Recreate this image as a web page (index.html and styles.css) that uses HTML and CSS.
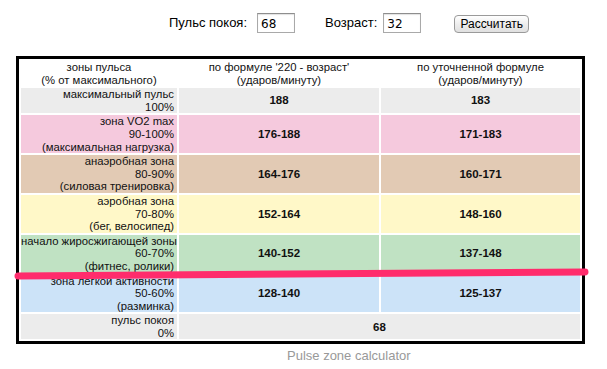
FILE: index.html
```html
<!DOCTYPE html>
<html lang="ru">
<head>
<meta charset="utf-8">
<title>Pulse zone calculator</title>
<link rel="stylesheet" href="styles.css">
</head>
<body>
<div class="page">
  <form class="calc">
    <label class="lbl lbl-pulse">Пульс покоя:</label>
    <input class="num" type="text" value="68">
    <label class="lbl lbl-age">Возраст:</label>
    <input class="num" type="text" value="32">
    <button class="btn" type="button">Рассчитать</button>
  </form>

  <div class="table-wrap">
    <table class="zones">
      <colgroup>
        <col class="c1">
        <col class="c2">
        <col class="c3">
      </colgroup>
      <thead>
        <tr>
          <th>зоны пульса<br>(% от максимального)</th>
          <th>по формуле '220 - возраст'<br>(ударов/минуту)</th>
          <th>по уточненной формуле<br>(ударов/минуту)</th>
        </tr>
      </thead>
      <tbody>
        <tr class="z-max">
          <td class="name">максимальный пульс<br>100%</td>
          <td class="val">188</td>
          <td class="val">183</td>
        </tr>
        <tr class="z-vo2">
          <td class="name">зона VO2 max<br>90-100%<br>(максимальная нагрузка)</td>
          <td class="val">176-188</td>
          <td class="val">171-183</td>
        </tr>
        <tr class="z-anaer">
          <td class="name">анаэробная зона<br>80-90%<br>(силовая тренировка)</td>
          <td class="val">164-176</td>
          <td class="val">160-171</td>
        </tr>
        <tr class="z-aer">
          <td class="name">аэробная зона<br>70-80%<br>(бег, велосипед)</td>
          <td class="val">152-164</td>
          <td class="val">148-160</td>
        </tr>
        <tr class="z-fat">
          <td class="name">начало жиросжигающей зоны<br>60-70%<br>(фитнес, ролики)</td>
          <td class="val">140-152</td>
          <td class="val">137-148</td>
        </tr>
        <tr class="z-light">
          <td class="name">зона легкой активности<br>50-60%<br>(разминка)</td>
          <td class="val">128-140</td>
          <td class="val">125-137</td>
        </tr>
        <tr class="z-rest">
          <td class="name">пульс покоя<br>0%</td>
          <td class="val" colspan="2">68</td>
        </tr>
      </tbody>
    </table>
    <svg class="marker" width="575" height="14" viewBox="0 0 575 14" aria-hidden="true">
      <line x1="4" y1="9" x2="571" y2="5" stroke="#ff2c6c" stroke-width="7" stroke-linecap="round"/>
    </svg>
  </div>

  <p class="caption">Pulse zone calculator</p>
</div>
</body>
</html>
```

FILE: styles.css
```css
html, body {
  margin: 0;
  padding: 0;
  background: #fff;
}

body {
  font-family: "Liberation Sans", Arial, Helvetica, sans-serif;
  color: #000;
}

.page {
  width: 607px;
}

.calc {
  display: flex;
  align-items: flex-start;
  padding: 13px 0 0 169px;
  margin: 0;
  height: 20px;
}

.lbl {
  font-size: 13px;
  line-height: 15px;
  padding-top: 2px;
}

.lbl-pulse {
  margin-right: 10px;
}

.lbl-age {
  margin-left: 30px;
  margin-right: 6px;
}

.num {
  box-sizing: border-box;
  width: 38px;
  height: 20px;
  margin: 0;
  padding: 2px 3px 0;
  border: 1px solid #a9a9a9;
  border-top-color: #8e8e8e;
  box-shadow: inset 0 1px 1px rgba(0, 0, 0, 0.12);
  font-family: "DejaVu Sans", "Liberation Sans", sans-serif;
  font-size: 12px;
  color: #000;
  background: #fff;
}

.btn {
  box-sizing: border-box;
  margin: 2px 0 0 33px;
  width: 75px;
  height: 18px;
  padding: 0;
  border: 1px solid #9a9a9a;
  border-radius: 4px;
  background: linear-gradient(#ffffff, #ececec 55%, #e0e0e0);
  font-family: "Liberation Sans", Arial, sans-serif;
  font-size: 12px;
  line-height: 16px;
  color: #000;
}

.table-wrap {
  position: relative;
  margin: 23px 0 0 16px;
  width: 569px;
}

.zones {
  width: 569px;
  table-layout: fixed;
  border: 3px solid #000;
  border-spacing: 2px;
  font-size: 11.3px;
  line-height: 12.6px;
}

.c1 { width: 156px; }
.c2 { width: 200px; }
.c3 { width: 199px; }

.zones th {
  font-weight: normal;
  text-align: center;
  padding: 0;
  color: #111;
  white-space: nowrap;
}

.zones td {
  padding: 0 3px 0 0;
  color: #111;
  white-space: nowrap;
}

.zones td.name {
  text-align: right;
}

.zones td.val {
  text-align: center;
  font-weight: bold;
  font-size: 11.5px;
  padding: 0;
}

.z-max td, .z-rest td { background: #ececec; }
.z-vo2 td { background: #f5c9dd; }
.z-anaer td { background: #e2cab4; }
.z-aer td { background: #fff8c8; }
.z-fat td { background: #c0e2c3; }
.z-light td { background: #cce3f8; }

.marker {
  position: absolute;
  left: -2px;
  top: 211px;
  display: block;
}

.caption {
  margin: 4px 0 0 287px;
  font-size: 13px;
  line-height: 15px;
  color: #999;
}
```
